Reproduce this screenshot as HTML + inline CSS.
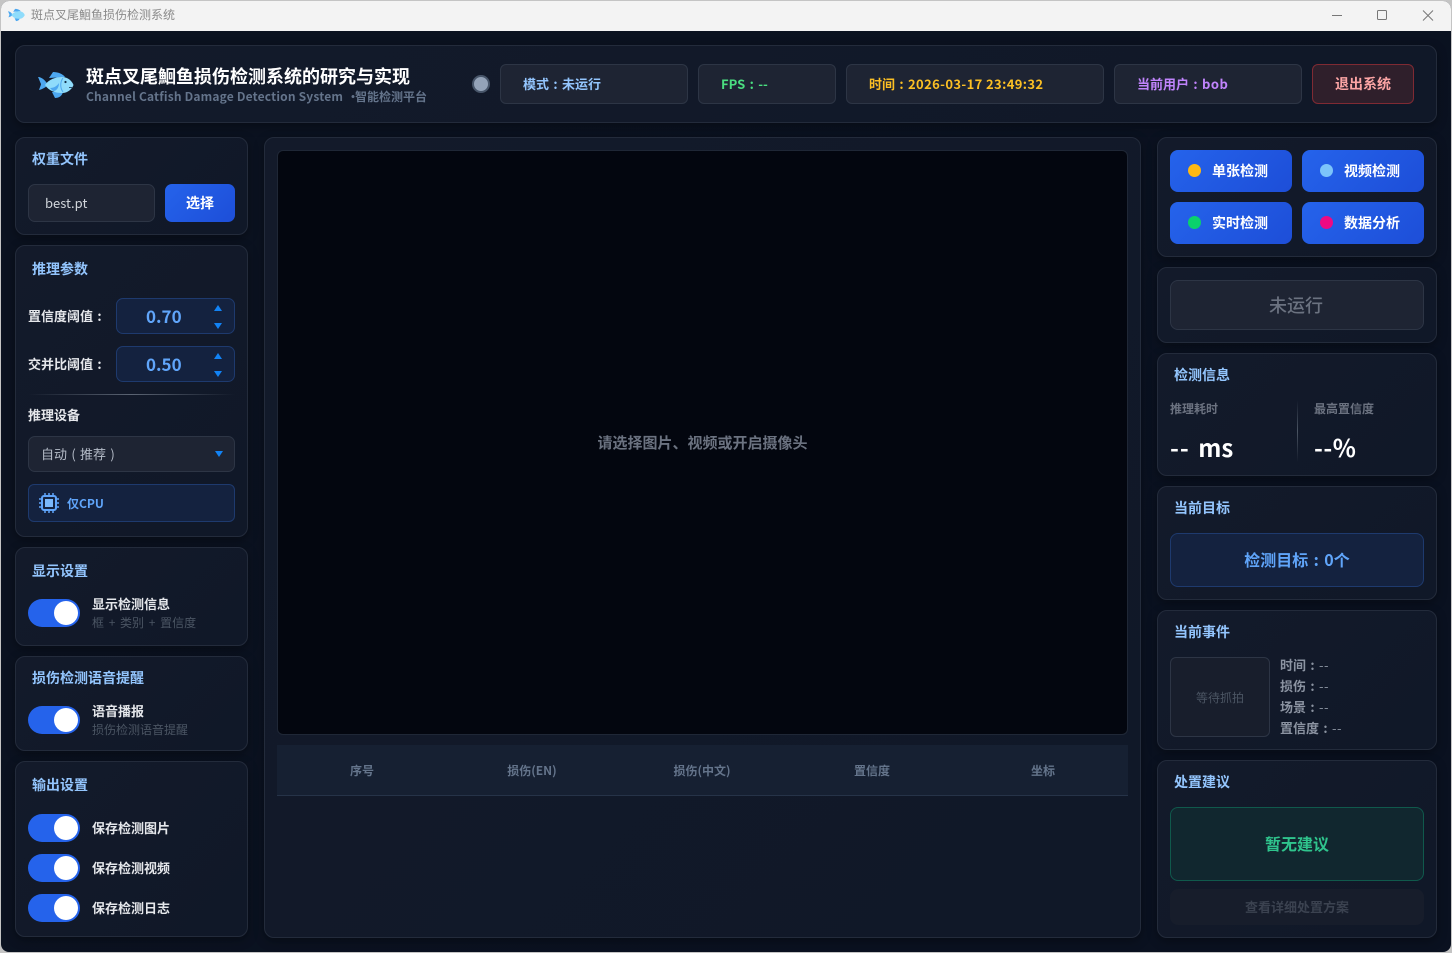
<!DOCTYPE html>
<html lang="zh-CN"><head><meta charset="utf-8"><title>斑点叉尾鮰鱼损伤检测系统</title>
<style>
*{box-sizing:border-box;margin:0;padding:0}
html,body{width:1452px;height:953px;overflow:hidden;background:#c4c4c4}
body{font-family:"Noto Sans CJK SC","Liberation Sans",sans-serif;position:relative}
#win{position:absolute;left:1px;top:1px;width:1450px;height:951px;border-radius:8px;overflow:hidden;background:linear-gradient(135deg,#0b1220,#0a1120)}
#tb{position:absolute;left:0;top:0;width:1450px;height:30px;background:#f3f3f3}
.a{position:absolute;white-space:nowrap}
.p{position:absolute;background:linear-gradient(135deg,#131a2a,#101828);border:1px solid #232b3b;border-radius:10px;box-shadow:0 3px 10px rgba(0,0,0,.35)}
.h{position:absolute;white-space:nowrap;font-size:14px;line-height:20px;font-weight:700;color:#93c5fd}
.t{position:absolute;white-space:nowrap;line-height:20px}
.c{display:inline-block;width:1em;text-align:center}
.chip{position:absolute;top:64px;height:40px;background:#1e2433;border:1px solid #2d3545;border-radius:6px;font-size:13px;font-weight:700;line-height:38px;padding-left:22px;white-space:nowrap}
.sw{position:absolute;left:28px;width:52px;height:28px;border-radius:14px;background:#2563eb}
.sw i{position:absolute;left:26px;top:2px;width:24px;height:24px;border-radius:50%;background:#fff}
.spin{position:absolute;left:116px;width:119px;height:36px;background:#14223f;border:1px solid #1e3a6e;border-radius:7px;color:#60a5fa;font-size:17px;font-weight:700;line-height:33px;padding-left:29px}
.up,.dn{position:absolute;right:12px;width:0;height:0;border-left:4.500px solid transparent;border-right:4.500px solid transparent}
.up{top:6px;border-bottom:6px solid #1283f5}.dn{top:24px;border-top:6px solid #1283f5}
.btn{position:absolute;width:122px;height:42px;border-radius:8px;background:linear-gradient(135deg,#2563eb,#1d4ed8);color:#fff;font-size:14px;font-weight:700;line-height:42px;padding-left:42px}
.btn i{position:absolute;left:18px;top:14px;width:13px;height:13px;border-radius:50%}
.th{position:absolute;top:745px;height:52px;width:170px;text-align:center;font-size:12px;line-height:52px;font-weight:700;color:#64748b}
.lb{color:#e5e7eb;font-size:13px;font-weight:700}
</style></head><body>
<div id="win">
<div id="tb"></div>
</div>
<svg class="a" style="left:8px;top:8px" width="17" height="14" viewBox="0 0 36 28"><path d="M0 6C4 6 8 10 10 14 8 16 5 18 1 19 2 16 3 14 3 13 2 11 1 8 0 6Z" fill="#4da8f0"/><path d="M11 7L15 1C20 1 25 3 27 6ZM14 21L17 27C21 27 24 25 25 21Z" fill="#4da8f0"/><path d="M7 14C11 8 18 6 24 6 30 6 34 10 35.500 14 34 18 30 22 24 22 17 22 11 20 7 14Z" fill="#8fdcfb"/></svg>
<div class="t" style="left:31px;top:5px;font-size:12px;color:#8a8a8a">斑点叉尾鮰鱼损伤检测系统</div>
<svg class="a" style="left:1320px;top:0" width="132" height="31"><path d="M12 15.500h10" stroke="#777" stroke-width="1"/><rect x="57.500" y="10.500" width="9" height="9" rx="1" fill="none" stroke="#777"/><path d="M103 10.500l10 10m0-10l-10 10" stroke="#777" stroke-width="1"/></svg>

<div class="p" style="left:15px;top:45px;width:1422px;height:78px"></div>
<svg class="a" style="left:38px;top:71px" width="36" height="28" viewBox="0 0 36 28"><path d="M0 6C4 6 8 10 10 14 8 16 5 18 1 19 2 16 3 14 3 13 2 11 1 8 0 6Z" fill="#4da8f0"/><path d="M11 7L15 1C20 1 25 3 27 6ZM14 21L17 27C21 27 24 25 25 21Z" fill="#4da8f0"/><path d="M7 14C11 8 18 6 24 6 30 6 34 10 35.500 14 34 18 30 22 24 22 17 22 11 20 7 14Z" fill="#8fdcfb"/><path d="M25 7C22 11 22 17 25 21" fill="none" stroke="#4da8f0" stroke-width="1"/><path d="M12 17C16 17 19 15 21 12 21 16 19 20 15 20Z" fill="#4da8f0"/><circle cx="27.500" cy="11" r="1.100" fill="#12304a"/><path d="M31 16.500h3" stroke="#12304a" stroke-width=".8"/></svg>
<div class="t" style="left:86px;top:66px;font-size:18px;font-weight:700;color:#fff">斑点叉尾鮰鱼损伤检测系统的研究与实现</div>
<div class="t" style="left:86px;top:87px;font-size:12px;font-weight:700;color:#64748b;letter-spacing:.18px">Channel Catfish Damage Detection System</div>
<div class="t" style="left:347px;top:87px;font-size:12px;font-weight:700;color:#64748b">·</div>
<div class="t" style="left:355px;top:87px;font-size:12px;font-weight:700;color:#64748b">智能检测平台</div>
<div class="a" style="left:472px;top:75px;width:18px;height:18px;border-radius:50%;background:#94a3b8;border:2px solid #475569"></div>
<div class="chip" style="left:500px;width:188px;color:#93c5fd">模式<span class="c">:</span>未运行</div>
<div class="chip" style="left:698px;width:138px;color:#4ade80">FPS<span class="c">:</span>--</div>
<div class="chip" style="left:846px;width:258px;color:#fbbf24">时间<span class="c">:</span><span style="letter-spacing:.37px">2026-03-17 23:49:32</span></div>
<div class="chip" style="left:1114px;width:188px;color:#c084fc">当前用户<span class="c">:</span><span style="letter-spacing:.5px">bob</span></div>
<div class="chip" style="left:1312px;width:102px;background:#2f1f2b;border-color:#7f2a33;color:#fca5a5;font-size:14px">退出系统</div>

<div class="p" style="left:15px;top:137px;width:233px;height:98px"></div>
<div class="h" style="left:32px;top:149px">权重文件</div>
<div class="a" style="left:28px;top:184px;width:127px;height:38px;background:#1e2433;border:1px solid #2d3545;border-radius:7px;color:#d1d5db;font-size:13px;line-height:36px;padding-left:16px">best.pt</div>
<div class="a" style="left:165px;top:184px;width:70px;height:38px;border-radius:7px;background:linear-gradient(135deg,#2563eb,#1d4ed8);color:#fff;font-size:14px;font-weight:700;line-height:38px;text-align:center">选择</div>

<div class="p" style="left:15px;top:245px;width:233px;height:292px"></div>
<div class="h" style="left:32px;top:259px">推理参数</div>
<div class="t lb" style="left:28px;top:306px">置信度阈值<span class="c">:</span></div>
<div class="spin" style="top:298px">0.70<span class="up"></span><span class="dn"></span></div>
<div class="t lb" style="left:28px;top:354px">交并比阈值<span class="c">:</span></div>
<div class="spin" style="top:346px">0.50<span class="up"></span><span class="dn"></span></div>
<div class="a" style="left:28px;top:394px;width:207px;height:1px;background:linear-gradient(90deg,transparent,#5b6473,transparent)"></div>
<div class="t lb" style="left:28px;top:405px">推理设备</div>
<div class="a" style="left:28px;top:436px;width:207px;height:36px;background:#1e2433;border:1px solid #2d3545;border-radius:7px;color:#b6bdc9;font-size:13px;line-height:34px;padding-left:12px">自动<span class="c">(</span>推荐<span class="c">)</span></div>
<div class="a" style="left:215px;top:451px;width:0;height:0;border-left:4px solid transparent;border-right:4px solid transparent;border-top:6px solid #1283f5"></div>
<div class="a" style="left:28px;top:484px;width:207px;height:38px;background:#14223f;border:1px solid #1e3a6e;border-radius:6px;color:#60a5fa;font-size:12px;font-weight:700;line-height:37px;padding-left:38px">仅CPU</div>
<svg class="a" style="left:39px;top:493px" width="20" height="20" viewBox="0 0 20 20"><rect x="3" y="3" width="14" height="14" rx="2" fill="none" stroke="#60a5fa" stroke-width="2"/><rect x="6" y="6" width="8" height="8" fill="#7ab8fb"/><path d="M6 0v3M10 0v3M14 0v3M6 17v3M10 17v3M14 17v3M0 6h3M0 10h3M0 14h3M17 6h3M17 10h3M17 14h3" stroke="#60a5fa" stroke-width="1.500"/></svg>

<div class="p" style="left:15px;top:547px;width:233px;height:99px"></div>
<div class="h" style="left:32px;top:561px">显示设置</div>
<div class="sw" style="top:599px"><i></i></div>
<div class="t lb" style="left:92px;top:594px">显示检测信息</div>
<div class="t" style="left:92px;top:613px;font-size:12px;color:#4b5563;word-spacing:2px">框 + 类别 + 置信度</div>

<div class="p" style="left:15px;top:656px;width:233px;height:95px"></div>
<div class="h" style="left:32px;top:668px">损伤检测语音提醒</div>
<div class="sw" style="top:706px"><i></i></div>
<div class="t lb" style="left:92px;top:701px">语音播报</div>
<div class="t" style="left:92px;top:720px;font-size:12px;color:#4b5563">损伤检测语音提醒</div>

<div class="p" style="left:15px;top:761px;width:233px;height:176px"></div>
<div class="h" style="left:32px;top:775px">输出设置</div>
<div class="sw" style="top:814px"><i></i></div><div class="t lb" style="left:92px;top:818px">保存检测图片</div>
<div class="sw" style="top:854px"><i></i></div><div class="t lb" style="left:92px;top:858px">保存检测视频</div>
<div class="sw" style="top:894px"><i></i></div><div class="t lb" style="left:92px;top:898px">保存检测日志</div>

<div class="p" style="left:264px;top:137px;width:877px;height:801px"></div>
<div class="a" style="left:277px;top:150px;width:851px;height:585px;background:#03060f;border:1px solid #1f2736;border-radius:6px"></div>
<div class="t" style="left:277px;top:433px;width:851px;text-align:center;font-size:15px;font-weight:700;color:#6b7280">请选择图片、视频或开启摄像头</div>
<div class="a" style="left:277px;top:745px;width:851px;height:51px;background:#162032;border-bottom:1px solid #263348"></div>
<div class="th" style="left:277px">序号</div>
<div class="th" style="left:447px">损伤(EN)</div>
<div class="th" style="left:617px">损伤(中文)</div>
<div class="th" style="left:787px">置信度</div>
<div class="th" style="left:958px">坐标</div>

<div class="p" style="left:1157px;top:137px;width:280px;height:120px"></div>
<div class="btn" style="left:1170px;top:150px"><i style="background:#fdb913"></i>单张检测</div>
<div class="btn" style="left:1302px;top:150px"><i style="background:#7cc4fa"></i>视频检测</div>
<div class="btn" style="left:1170px;top:202px"><i style="background:#0ad16c"></i>实时检测</div>
<div class="btn" style="left:1302px;top:202px"><i style="background:#ee0a83"></i>数据分析</div>

<div class="p" style="left:1157px;top:267px;width:280px;height:76px"></div>
<div class="a" style="left:1170px;top:280px;width:254px;height:50px;background:#1e2433;border:1px solid #2d3545;border-radius:8px;color:#6b7280;font-size:18px;font-weight:500;line-height:48px;text-align:center;padding-right:2px">未运行</div>

<div class="p" style="left:1157px;top:353px;width:280px;height:123px"></div>
<div class="h" style="left:1174px;top:365px">检测信息</div>
<div class="t" style="left:1170px;top:399px;font-size:12px;font-weight:700;color:#6b7280">推理耗时</div>
<div class="t" style="left:1314px;top:399px;font-size:12px;font-weight:700;color:#6b7280">最高置信度</div>
<div class="a" style="left:1297px;top:400px;width:1px;height:62px;background:linear-gradient(180deg,transparent,#4b5563,transparent)"></div>
<div class="t" style="left:1170px;top:433px;font-size:24px;line-height:28px;font-weight:700;color:#fff"><span style="letter-spacing:1px">--</span> <span style="margin-left:3px">ms</span></div>
<div class="t" style="left:1314px;top:433px;font-size:24px;line-height:28px;font-weight:700;color:#fff"><span style="letter-spacing:.5px">--</span>%</div>

<div class="p" style="left:1157px;top:486px;width:280px;height:114px"></div>
<div class="h" style="left:1174px;top:498px">当前目标</div>
<div class="a" style="left:1170px;top:533px;width:254px;height:54px;background:#14223f;border:1px solid #1e3a6e;border-radius:8px;color:#60a5fa;font-size:16px;font-weight:700;line-height:51px;text-align:center">检测目标<span class="c">:</span>0个</div>

<div class="p" style="left:1157px;top:610px;width:280px;height:140px"></div>
<div class="h" style="left:1174px;top:622px">当前事件</div>
<div class="a" style="left:1170px;top:657px;width:100px;height:80px;background:#181e2c;border:1px solid #2d3545;border-radius:6px;color:#4b5563;font-size:12px;line-height:80px;text-align:center">等待抓拍</div>
<div class="t" style="left:1280px;top:655px;font-size:13px;font-weight:700;color:#8b93a1">时间<span class="c">:</span><span style="font-weight:400;letter-spacing:.5px">--</span></div>
<div class="t" style="left:1280px;top:676px;font-size:13px;font-weight:700;color:#8b93a1">损伤<span class="c">:</span><span style="font-weight:400;letter-spacing:.5px">--</span></div>
<div class="t" style="left:1280px;top:697px;font-size:13px;font-weight:700;color:#8b93a1">场景<span class="c">:</span><span style="font-weight:400;letter-spacing:.5px">--</span></div>
<div class="t" style="left:1280px;top:718px;font-size:13px;font-weight:700;color:#8b93a1">置信度<span class="c">:</span><span style="font-weight:400;letter-spacing:.5px">--</span></div>

<div class="p" style="left:1157px;top:760px;width:280px;height:178px"></div>
<div class="h" style="left:1174px;top:772px">处置建议</div>
<div class="a" style="left:1170px;top:807px;width:254px;height:74px;background:#11272f;border:1px solid #10594c;border-radius:8px;color:#2fc48d;font-size:16px;font-weight:700;line-height:70px;text-align:center">暂无建议</div>
<div class="a" style="left:1170px;top:889px;width:254px;height:36px;background:#171d2b;border-radius:8px;color:#3b4250;font-size:13px;font-weight:700;line-height:36px;text-align:center">查看详细处置方案</div>
</body></html>
